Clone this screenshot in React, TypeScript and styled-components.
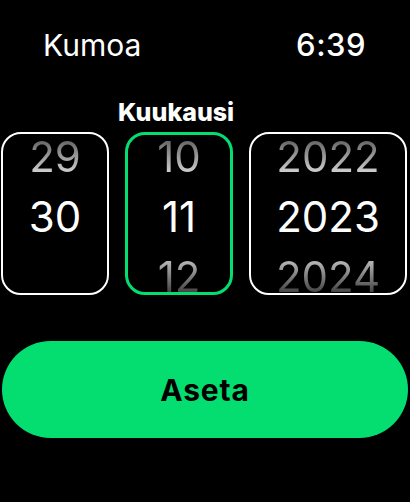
import { createGlobalStyle } from "styled-components";
import styled from "styled-components";

const GlobalStyle = createGlobalStyle`
  html, body {
    margin: 0;
    padding: 0;
    background: #000;
  }
  body {
    font-family: Inter, "Noto Sans", sans-serif;
    color: #fff;
  }
`;

const GREEN = "#04de71";

const Screen = styled.div`
  width: 410px;
  height: 502px;
  background: #000;
  overflow: hidden;
  display: flex;
  flex-direction: column;
`;

const TopBar = styled.div`
  display: flex;
  justify-content: space-between;
  align-items: center;
  padding: 24px 44px 0 43px;
  height: 42px;
  line-height: 42px;
`;

const Cancel = styled.span`
  font-size: 30px;
  font-weight: 400;
`;

const Clock = styled.span`
  font-size: 31px;
  font-weight: 500;
  letter-spacing: 0.5px;
`;

const Label = styled.div`
  font-size: 25px;
  font-weight: 800;
  line-height: 28px;
  margin-top: 32px;
  padding-left: 118px;
`;

const Pickers = styled.div`
  display: flex;
  gap: 16px;
  margin-top: 6px;
  padding-left: 1px;
`;

const Wheel = styled.div<{ $w: number; $active?: boolean }>`
  width: ${(p) => p.$w}px;
  height: 163px;
  box-sizing: border-box;
  border: ${(p) => (p.$active ? `3px solid ${GREEN}` : "2px solid #fff")};
  border-radius: 20px;
  display: flex;
  flex-direction: column;
  justify-content: center;
  align-items: center;
  overflow: hidden;
  padding-top: 7px;
`;

const Item = styled.div<{ $pos: "top" | "mid" | "bot" }>`
  flex: 0 0 60px;
  height: 60px;
  line-height: 60px;
  font-size: 42px;
  font-weight: 400;
  text-align: center;
  color: #fff;
  ${(p) =>
    p.$pos === "top"
      ? `background: linear-gradient(180deg, #6a6a6a 25%, #cdcdcd 75%);
         -webkit-background-clip: text; background-clip: text; color: transparent;`
      : p.$pos === "bot"
      ? `background: linear-gradient(180deg, #b4b4b4 25%, #3a3a3a 80%);
         -webkit-background-clip: text; background-clip: text; color: transparent;`
      : ""}
`;

const SetButton = styled.button`
  margin: 46px 0 0 2px;
  width: 406px;
  height: 97px;
  border: none;
  border-radius: 49px;
  background: ${GREEN};
  color: #000;
  font-family: Inter, "Noto Sans", sans-serif;
  font-size: 30px;
  font-weight: 700;
  letter-spacing: 0.8px;
`;

const columns = [
  { w: 108, values: ["29", "30", ""] },
  { w: 108, values: ["10", "11", "12"], active: true },
  { w: 158, values: ["2022", "2023", "2024"] },
];

const positions = ["top", "mid", "bot"] as const;

export default function App() {
  return (
    <>
      <GlobalStyle />
      <Screen>
        <TopBar>
          <Cancel>Kumoa</Cancel>
          <Clock>6:39</Clock>
        </TopBar>
        <Label>Kuukausi</Label>
        <Pickers>
          {columns.map((c, i) => (
            <Wheel key={i} $w={c.w} $active={c.active}>
              {c.values.map((v, j) => (
                <Item key={j} $pos={positions[j]}>
                  {v}
                </Item>
              ))}
            </Wheel>
          ))}
        </Pickers>
        <SetButton>Aseta</SetButton>
      </Screen>
    </>
  );
}
